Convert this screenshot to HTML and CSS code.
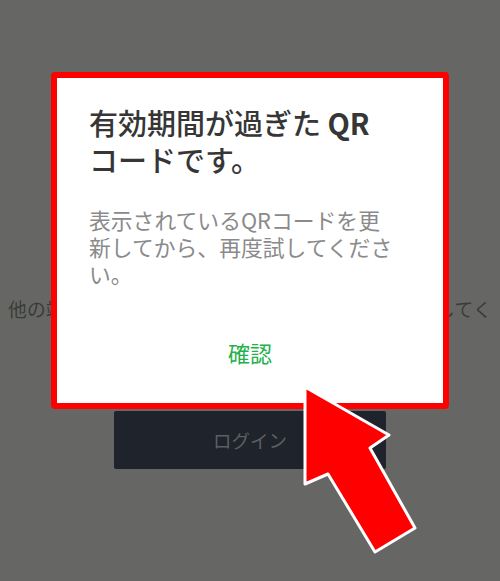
FILE: index.html
```html
<!DOCTYPE html>
<html lang="ja">
<head>
<meta charset="utf-8">
<link rel="stylesheet" href="styles.css">
</head>
<body>
<main class="page">
  <p class="lead">他の端末のLINEアプリでこのQRコードをスキャンしてく</p>
  <div class="login">ログイン</div>
</main>

<div class="dialog">
  <h1 class="title">有効期間が過ぎた <b>QR</b><br>コードです。</h1>
  <p class="msg">表示されているQRコードを更新してから、再度試してください。</p>
  <div class="actions"><span class="ok">確認</span></div>
</div>

<svg class="arrow" viewBox="0 0 500 581" width="500" height="581">
  <polygon points="305,387 389,435 370,448 415,528 375,552 328,474 305,484" fill="#ff0000" stroke="#ffffff" stroke-width="3" stroke-linejoin="round"/>
</svg>
</body>
</html>
```

FILE: styles.css
```css
html, body {
  margin: 0;
  padding: 0;
}
body {
  width: 500px;
  height: 581px;
  background: #666765;
  overflow: hidden;
  position: relative;
  font-family: "Noto Sans CJK JP", "Noto Sans", sans-serif;
}
.page {
  display: flex;
  flex-direction: column;
  align-items: center;
  padding-top: 297px;
}
.lead {
  align-self: stretch;
  margin: 0 0 0 8px;
  font-size: 18.8px;
  line-height: 24px;
  letter-spacing: 0.2px;
  color: #3a3b39;
  white-space: nowrap;
}
.login {
  margin-top: 90px;
  width: 272px;
  height: 58px;
  background: #1f232b;
  border-radius: 2px;
  color: #5c5f63;
  font-size: 18.5px;
  display: flex;
  align-items: center;
  justify-content: center;
}
.dialog {
  position: absolute;
  left: 51px;
  top: 72px;
  width: 398px;
  height: 337px;
  box-sizing: border-box;
  border: 6px solid #ff0000;
  border-radius: 4px;
  background: #ffffff;
  padding: 26px 44px 0 32px;
}
.title {
  margin: 0;
  font-size: 29px;
  line-height: 37px;
  font-weight: 500;
  color: #363636;
}
.title b {
  font-weight: 700;
}
.msg {
  margin: 28px 0 0;
  font-size: 21.8px;
  line-height: 27px;
  color: #8a8a8a;
}
.actions {
  margin: 50px -44px 0 -32px;
  display: flex;
  justify-content: center;
}
.ok {
  font-size: 22px;
  line-height: 30px;
  color: #22b14c;
}
.arrow {
  position: absolute;
  left: 0;
  top: 0;
  pointer-events: none;
}
```
